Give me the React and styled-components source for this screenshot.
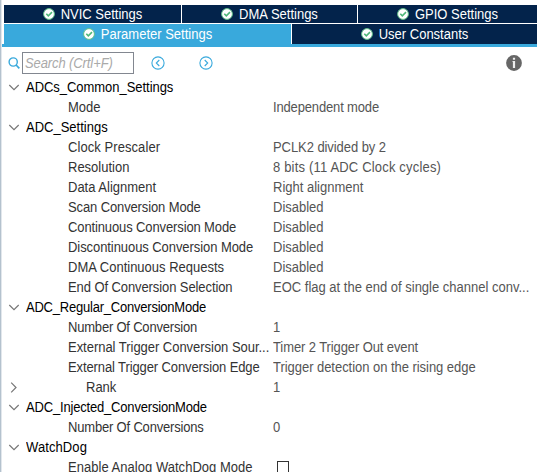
import React from "react";
import styled, { createGlobalStyle } from "styled-components";

const GlobalStyle = createGlobalStyle`
  * { box-sizing: border-box; }
  body {
    margin: 0;
    overflow: hidden;
    background: #fff;
    font-family: "Liberation Sans", Arial, sans-serif;
    font-size: 13px;
  }
`;

const Panel = styled.main`
  width: 537px;
  height: 472px;
  overflow: hidden;
  background: #fff;
  border-left: 1px solid #b4c2ce;
  box-shadow: inset 1px 0 #e2e7ec;
`;

const Tabs = styled.nav`
  padding: 5px 0 0 3px;
`;

const TabRow = styled.div`
  display: grid;
  grid-template-columns: ${(p) => p.$columns};
  gap: 1px;
  height: ${(p) => p.$height}px;
  margin-bottom: ${(p) => p.$gap || 0}px;
`;

const Tab = styled.div`
  display: flex;
  align-items: center;
  justify-content: center;
  gap: 6px;
  background: ${(p) => (p.$active ? "#39a9dc" : "#03234b")};
  color: #fff;
  line-height: 18px;
  white-space: nowrap;

  svg { flex: none; }
`;

/* Slightly condensed lettering: full height, narrow width. */
const TabCaption = styled.span`
  transform: translateY(1px) scaleY(1.077);
  transform-origin: 0 13px;
`;

const Underline = styled.div`
  height: 3px;
  margin-left: -2px;
  background: #39a9dc;
`;

const Toolbar = styled.div`
  display: flex;
  align-items: center;
  height: 30px;
  padding: 2px 15px 0 7px;
`;

const SearchBox = styled.div`
  width: 112px;
  height: 22px;
  margin: 0 17px 0 2px;
  border: 1px solid #828790;
  background: #fff;
`;

const SearchInput = styled.input`
  display: block;
  width: 100%;
  height: 20px;
  padding: 0 2px;
  border: 0;
  outline: none;
  background: transparent;
  font: italic 13px "Liberation Sans", Arial, sans-serif;
  letter-spacing: -0.1px;
  transform: scaleY(1.077);

  &::placeholder { color: #aaa; opacity: 1; }
`;

const IconSlot = styled.span`
  display: flex;
  margin-right: ${(p) => p.$after || 0}px;
  margin-left: ${(p) => (p.$end ? "auto" : 0)};
`;

const Row = styled.div`
  display: grid;
  grid-template-columns: 25px 247px 264px;
  height: 20px;
  line-height: 22px;
  white-space: nowrap;
`;

const Toggle = styled.span`
  padding: 5px 0 0 7px;
  line-height: 0;
`;

const CellText = styled.span`
  letter-spacing: ${(p) => p.$spacing || 0}px;
  transform: scaleY(1.077);
  transform-origin: 0 15px;
`;

const Heading = styled(CellText)`
  color: #000;
`;

const Label = styled(CellText)`
  padding-left: ${(p) => (p.$nested ? 60 : 42)}px;
  color: #333;
`;

const Value = styled(CellText)`
  color: #555;
`;

const CheckBox = styled.span`
  display: block;
  width: 12px;
  height: 12px;
  margin: 4px 0 0 4px;
  border: 1px solid #333;
`;

const CheckIcon = () => (
  <svg width="12" height="12" viewBox="0 0 12 12">
    <circle cx="6" cy="6" r="5.4" fill="#fff" stroke="#5fc088" strokeWidth="1" />
    <path d="M3.3 5.7 5.3 7.8 9 4.1" fill="none" stroke="#4fb87a" strokeWidth="1.6" />
  </svg>
);

const SearchIcon = () => (
  <svg width="12" height="12" viewBox="0 0 12 12" fill="none" stroke="#39a9dc">
    <circle cx="5.2" cy="5" r="4.1" strokeWidth="1.4" />
    <path d="m8.1 8 3.2 3.3" strokeWidth="1.7" />
  </svg>
);

const ArrowIcon = ({ d }) => (
  <svg width="14" height="14" viewBox="0 0 14 14" fill="none" stroke="#39a9dc" strokeWidth="1.1">
    <circle cx="7" cy="7" r="6.1" />
    <path d={d} />
  </svg>
);

const InfoIcon = () => (
  <svg width="16" height="16" viewBox="0 0 16 16">
    <circle cx="8" cy="8" r="7.9" fill="#666" />
    <path d="M6.9 2.8h2.2v1.9H6.9zM6.5 6h2.6v7H6.9V7h-.4z" fill="#eee" />
  </svg>
);

const Chevron = ({ open }) => (
  <svg width="12" height="11" viewBox="0 0 12 11" fill="none" stroke="#777" strokeWidth="1.2">
    <path d={open ? "M1.3 3 6 7.6 10.7 3" : "M3.2.7 8 5.5 3.2 10.3"} />
  </svg>
);

const rows = [
  { group: "ADCs_Common_Settings", ls: -0.04 },
  { label: "Mode", value: "Independent mode", vs: -0.15 },
  { group: "ADC_Settings" },
  { label: "Clock Prescaler", ls: 0.07, value: "PCLK2 divided by 2", vs: -0.07 },
  { label: "Resolution", value: "8 bits (11 ADC Clock cycles)", vs: 0.18 },
  { label: "Data Alignment", value: "Right alignment" },
  { label: "Scan Conversion Mode", ls: -0.12, value: "Disabled" },
  { label: "Continuous Conversion Mode", ls: -0.12, value: "Disabled" },
  { label: "Discontinuous Conversion Mode", ls: -0.07, value: "Disabled" },
  { label: "DMA Continuous Requests", value: "Disabled" },
  { label: "End Of Conversion Selection", ls: -0.09, value: "EOC flag at the end of single channel conv..." },
  { group: "ADC_Regular_ConversionMode", ls: -0.22 },
  { label: "Number Of Conversion", ls: -0.2, value: "1" },
  { label: "External Trigger Conversion Sour...", ls: -0.03, value: "Timer 2 Trigger Out event", vs: -0.1 },
  { label: "External Trigger Conversion Edge", ls: -0.11, value: "Trigger detection on the rising edge", vs: -0.04 },
  { label: "Rank", value: "1", nested: true },
  { group: "ADC_Injected_ConversionMode", ls: -0.18 },
  { label: "Number Of Conversions", ls: -0.18, value: "0" },
  { group: "WatchDog", ls: 0.1 },
  { label: "Enable Analog WatchDog Mode", ls: 0.03, checkbox: true },
];

const TabItem = ({ active, children }) => (
  <Tab $active={active}>
    <CheckIcon />
    <TabCaption>{children}</TabCaption>
  </Tab>
);

export default function App() {
  return (
    <>
      <GlobalStyle />
      <Panel>
        <Tabs>
          <TabRow $columns="177px 175px 179px" $height={18} $gap={1}>
            <TabItem>NVIC Settings</TabItem>
            <TabItem>DMA Settings</TabItem>
            <TabItem>GPIO Settings</TabItem>
          </TabRow>
          <TabRow $columns="287px 245px" $height={20}>
            <TabItem active>Parameter Settings</TabItem>
            <TabItem>User Constants</TabItem>
          </TabRow>
          <Underline />
        </Tabs>
        <Toolbar>
          <SearchIcon />
          <SearchBox>
            <SearchInput placeholder="Search (Crtl+F)" />
          </SearchBox>
          <IconSlot $after={34}><ArrowIcon d="M8.3 4 5.3 7l3 3" /></IconSlot>
          <IconSlot><ArrowIcon d="m5.7 4 3 3-3 3" /></IconSlot>
          <IconSlot $end><InfoIcon /></IconSlot>
        </Toolbar>
        {rows.map((r) => (
          <Row key={r.group || r.label}>
            <Toggle>{(r.group || r.nested) && <Chevron open={!r.nested} />}</Toggle>
            {r.group ? (
              <Heading $spacing={r.ls}>{r.group}</Heading>
            ) : (
              <Label $nested={r.nested} $spacing={r.ls}>{r.label}</Label>
            )}
            {r.checkbox ? <CheckBox /> : <Value $spacing={r.vs}>{r.value}</Value>}
          </Row>
        ))}
      </Panel>
    </>
  );
}
